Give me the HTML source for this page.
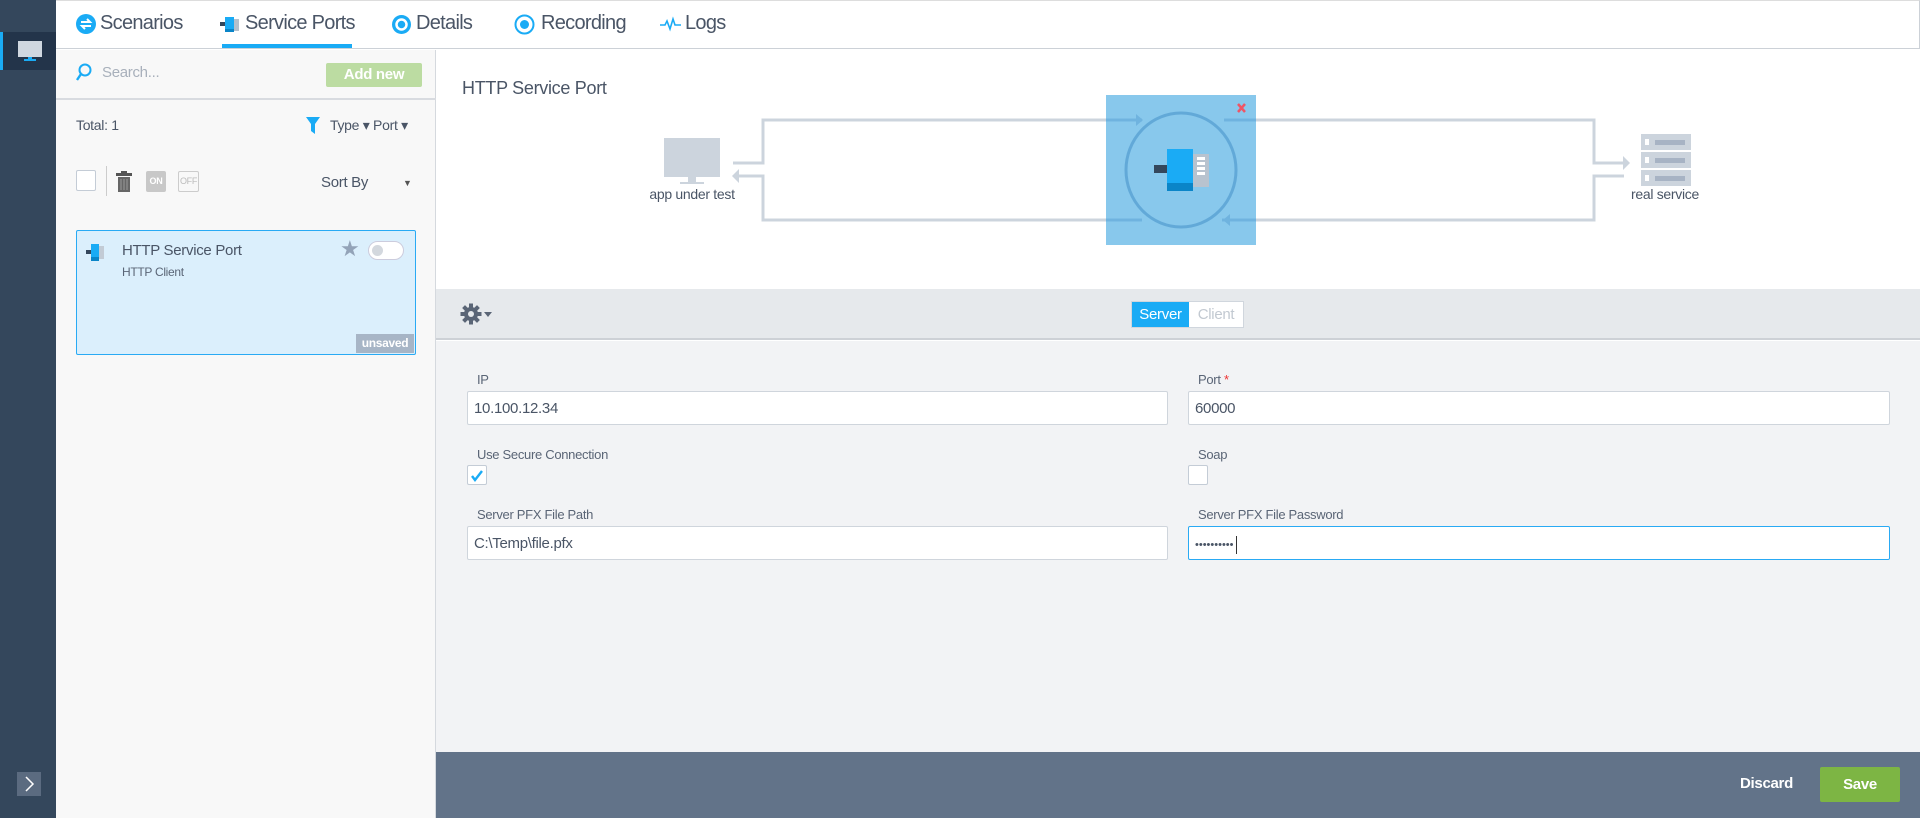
<!DOCTYPE html>
<html><head><meta charset="utf-8"><style>
*{box-sizing:border-box;margin:0;padding:0}
body{width:1920px;height:818px;overflow:hidden;background:#fff;font-family:"Liberation Sans Narrow","Liberation Sans",sans-serif;color:#4a5566;position:relative;letter-spacing:-0.3px}
.a{position:absolute}
.tab{position:absolute;top:12px;font-size:20px;color:#4a5566;letter-spacing:-0.7px}
.lbl{position:absolute;font-size:13px;color:#5a6576}
.inp{position:absolute;background:#fff;border:1px solid #cfd5dc;border-radius:2px;height:34px;font-size:15px;padding:8px 6px;color:#4a5566}
.cb{position:absolute;width:20px;height:20px;background:#fff;border:1px solid #c4ccd6;border-radius:2px}
</style></head><body>
<div class="a" style="left:0;top:0;width:56px;height:818px;background:#34475c"></div>
<div class="a" style="left:0;top:32px;width:56px;height:38px;background:#23344a;border-left:3px solid #1aabf5"></div>
<div class="a" style="left:18px;top:41px;width:24px;height:16px;background:#cfd7e0"></div>
<div class="a" style="left:28px;top:57px;width:4px;height:3px;background:#1aabf5"></div>
<div class="a" style="left:24px;top:59px;width:12px;height:2px;background:#1aabf5"></div>
<div class="a" style="left:17px;top:772px;width:24px;height:24px;background:#5b6b80"></div>
<svg class="a" style="left:17px;top:772px" width="24" height="24"><path d="M9 5l7 7-7 7" stroke="#fff" stroke-width="1.5" fill="none"/></svg>

<div class="a" style="left:56px;top:0;width:1864px;height:49px;border-bottom:1px solid #ccd1d7;border-right:1px solid #ccd1d7;border-top:1px solid #ddd"></div>
<svg class="a" style="left:76px;top:14px" width="20" height="20"><circle cx="10" cy="10" r="10" fill="#1aabf5"/><path d="M5 8h9l-3-3M15 12H6l3 3" stroke="#fff" stroke-width="2" fill="none"/></svg>
<div class="tab" style="left:100px">Scenarios</div>
<svg class="a" style="left:220px;top:14px" width="22" height="22"><rect x="0" y="8" width="5" height="4" fill="#34475c"/><rect x="5" y="3" width="9" height="15" fill="#1aabf5"/><rect x="5" y="15" width="9" height="3" fill="#0a85c8"/><rect x="14" y="5" width="5" height="12" fill="#b5c0cc"/></svg>
<div class="tab" style="left:245px">Service Ports</div>
<div class="a" style="left:222px;top:44px;width:130px;height:4px;background:#1aabf5"></div>
<svg class="a" style="left:391px;top:14px" width="21" height="21"><circle cx="10.5" cy="10.5" r="9.5" fill="#1aabf5"/><circle cx="10.5" cy="10.5" r="5" fill="none" stroke="#fff" stroke-width="2.5"/><circle cx="10.5" cy="10.5" r="2" fill="#1aabf5"/></svg>
<div class="tab" style="left:416px">Details</div>
<svg class="a" style="left:514px;top:14px" width="21" height="21"><circle cx="10.5" cy="10.5" r="9" fill="none" stroke="#1aabf5" stroke-width="2"/><circle cx="10.5" cy="10.5" r="4.5" fill="#1aabf5"/></svg>
<div class="tab" style="left:541px">Recording</div>
<svg class="a" style="left:660px;top:16px" width="22" height="16"><path d="M0 9h5l2-4 3 8 3-10 2 6h6" stroke="#1aabf5" stroke-width="1.6" fill="none"/></svg>
<div class="tab" style="left:685px">Logs</div>

<div class="a" style="left:56px;top:50px;width:380px;height:768px;background:#f8f8f8;border-right:1px solid #d5d9de"></div>
<div class="a" style="left:56px;top:98px;width:380px;height:2px;background:#d8dbe0"></div>
<svg class="a" style="left:75px;top:63px" width="18" height="20"><circle cx="10" cy="7" r="5.5" stroke="#1aabf5" stroke-width="2" fill="none"/><path d="M6 11l-4 6" stroke="#1aabf5" stroke-width="2.4"/></svg>
<div class="a" style="left:102px;top:64px;font-size:15px;color:#a8b0bb">Search...</div>
<div class="a" style="left:326px;top:63px;width:96px;height:24px;background:#bcdca2;border-radius:2px;color:#fff;font-size:15px;text-align:center;line-height:24px;font-weight:bold">Add new</div>
<div class="a" style="left:76px;top:117px;font-size:14px">Total: 1</div>
<svg class="a" style="left:306px;top:117px" width="14" height="17"><path d="M0 0h14l-5 7v10l-4-3V7z" fill="#1aabf5"/></svg>
<div class="a" style="left:330px;top:117px;font-size:14px">Type ▾ Port ▾</div>
<div class="cb" style="left:76px;top:170px;width:20px;height:21px"></div>
<div class="a" style="left:106px;top:166px;width:1px;height:30px;background:#ccc"></div>
<svg class="a" style="left:116px;top:171px" width="16" height="21"><rect x="0" y="2" width="16" height="3" fill="#555"/><rect x="5" y="0" width="6" height="3" fill="#555"/><rect x="2" y="6" width="12" height="15" fill="#666"/><path d="M5 8v11M8 8v11M11 8v11" stroke="#999" stroke-width="1"/></svg>
<div class="a" style="left:146px;top:171px;width:20px;height:21px;background:#c8c8c8;border-radius:2px;color:#fff;font-size:9px;text-align:center;line-height:21px;font-weight:bold">ON</div>
<div class="a" style="left:178px;top:171px;width:21px;height:21px;border:1px solid #ccc;border-radius:2px;color:#bbb;font-size:9px;text-align:center;line-height:19px">OFF</div>
<div class="a" style="left:321px;top:174px;font-size:15px">Sort By</div>
<div class="a" style="left:403px;top:178px;font-size:9px;color:#555">▼</div>

<div class="a" style="left:76px;top:230px;width:340px;height:125px;background:#dbeffc;border:1px solid #29aaf4;border-radius:2px"></div>
<svg class="a" style="left:86px;top:242px" width="22" height="22"><rect x="0" y="8" width="5" height="4" fill="#34475c"/><rect x="5" y="2" width="8" height="16" fill="#1aabf5"/><rect x="5" y="15" width="8" height="4" fill="#0a85c8"/><rect x="13" y="4" width="5" height="13" fill="#c2cbd5"/></svg>
<div class="a" style="left:122px;top:242px;font-size:15px;color:#4a5566">HTTP Service Port</div>
<div class="a" style="left:122px;top:265px;font-size:12px;color:#5a6576">HTTP Client</div>
<div class="a" style="left:340px;top:236px;font-size:22px;color:#93a3b8">★</div>
<div class="a" style="left:368px;top:241px;width:36px;height:19px;background:#fff;border:1px solid #ccd;border-radius:10px"></div>
<div class="a" style="left:372px;top:245px;width:11px;height:11px;background:#d3d8de;border-radius:50%"></div>
<div class="a" style="left:356px;top:334px;width:58px;height:19px;background:#a7b5c6;color:#fff;font-size:12px;text-align:center;line-height:19px;font-weight:bold">unsaved</div>

<div class="a" style="left:462px;top:78px;font-size:18px;color:#4a5566">HTTP Service Port</div>
<div class="a" style="left:664px;top:138px;width:56px;height:39px;background:#ccd4dd"></div>
<div class="a" style="left:688px;top:177px;width:8px;height:5px;background:#ccd4dd"></div>
<div class="a" style="left:680px;top:182px;width:24px;height:2px;background:#ccd4dd"></div>
<div class="a" style="left:640px;top:186px;width:104px;text-align:center;font-size:14px">app under test</div>
<svg class="a" style="left:720px;top:100px" width="920" height="140">
<g stroke="#ccd4dd" stroke-width="3" fill="none">
<path d="M13 63h30V20h377"/><path d="M420 120H43V76H14"/>
<path d="M504 20h370v43h29"/><path d="M904 76h-30v44H502"/>
</g>
<g fill="#ccd4dd"><path d="M12 76l7-7v14z"/><path d="M910 63l-7-7v14z"/></g>
</svg>
<div class="a" style="left:1106px;top:95px;width:150px;height:150px;background:#88c8ec"></div>
<svg class="a" style="left:1106px;top:95px" width="150" height="150">
<path d="M0 25h36M118 25h32M0 125h36M116 125h34" stroke="#6fb3df" stroke-width="3"/>
<ellipse cx="75" cy="75" rx="55" ry="57" stroke="#62a9d8" stroke-width="3" fill="none"/>
<path d="M30 19l7 6-7 6zM124 119l-7 6 7 6z" fill="#6fb3df"/>
<rect x="61" y="54" width="26" height="42" fill="#1aabf5"/><rect x="61" y="88" width="26" height="8" fill="#0a85c8"/>
<rect x="48" y="70" width="13" height="8" fill="#34475c"/>
<rect x="87" y="59" width="16" height="33" fill="#b8c3cf"/>
<g fill="#fff"><rect x="91" y="62" width="8" height="3"/><rect x="91" y="67" width="8" height="3"/><rect x="91" y="72" width="8" height="3"/><rect x="91" y="77" width="8" height="3"/></g>
<path d="M132 9l7 8M139 9l-7 8" stroke="#ee5566" stroke-width="2.5"/>
</svg>
<svg class="a" style="left:1641px;top:134px" width="52" height="52">
<g fill="#ccd4dd"><rect y="0" width="50" height="16"/><rect y="18" width="50" height="16"/><rect y="36" width="50" height="16"/></g>
<g fill="#a7b3c4"><rect x="14" y="6" width="30" height="5"/><rect x="14" y="24" width="30" height="5"/><rect x="14" y="42" width="30" height="5"/></g>
<g fill="#fff"><rect x="4" y="5" width="4" height="6"/><rect x="4" y="23" width="4" height="6"/><rect x="4" y="41" width="4" height="6"/></g>
</svg>
<div class="a" style="left:1615px;top:186px;width:100px;text-align:center;font-size:14px">real service</div>

<div class="a" style="left:436px;top:289px;width:1484px;height:51px;background:#e6e9ec;border-bottom:2px solid #cdd1d6"></div>
<svg class="a" style="left:460px;top:303px" width="34" height="22"><g transform="translate(11 11)" fill="#5a6576"><circle r="7"/><rect x="-2" y="-10.5" width="4" height="21"/><rect x="-2" y="-10.5" width="4" height="21" transform="rotate(45)"/><rect x="-2" y="-10.5" width="4" height="21" transform="rotate(90)"/><rect x="-2" y="-10.5" width="4" height="21" transform="rotate(135)"/><circle r="3" fill="#e6e9ec"/></g><path d="M24 9h8l-4 5z" fill="#5a6576"/></svg>
<div class="a" style="left:1131px;top:301px;width:113px;height:27px;border:1px solid #d0d6dd;background:#fff"></div>
<div class="a" style="left:1132px;top:302px;width:57px;height:25px;background:#1aabf5;color:#fff;font-size:15px;text-align:center;line-height:25px">Server</div>
<div class="a" style="left:1189px;top:302px;width:54px;height:25px;color:#c2c9d1;font-size:15px;text-align:center;line-height:25px">Client</div>

<div class="a" style="left:436px;top:341px;width:1484px;height:411px;background:#f2f3f5"></div>
<div class="lbl" style="left:477px;top:372px">IP</div>
<div class="inp" style="left:467px;top:391px;width:701px">10.100.12.34</div>
<div class="lbl" style="left:1198px;top:372px">Port <span style="color:#e33">*</span></div>
<div class="inp" style="left:1188px;top:391px;width:702px">60000</div>
<div class="lbl" style="left:477px;top:447px">Use Secure Connection</div>
<div class="cb" style="left:467px;top:465px"></div>
<svg class="a" style="left:470px;top:469px" width="14" height="14"><path d="M2 7l3 4 7-9" stroke="#1aabf5" stroke-width="2.4" fill="none"/></svg>
<div class="lbl" style="left:1198px;top:447px">Soap</div>
<div class="cb" style="left:1188px;top:465px"></div>
<div class="lbl" style="left:477px;top:507px">Server PFX File Path</div>
<div class="inp" style="left:467px;top:526px;width:701px">C:\Temp\file.pfx</div>
<div class="lbl" style="left:1198px;top:507px">Server PFX File Password</div>
<div class="inp" style="left:1188px;top:526px;width:702px;border-color:#29aaf4;font-size:11px;padding-top:9px;letter-spacing:0px">••••••••••<span style="display:inline-block;width:1px;height:18px;background:#333;vertical-align:middle;margin-left:2px"></span></div>

<div class="a" style="left:436px;top:752px;width:1484px;height:66px;background:#627389"></div>
<div class="a" style="left:1740px;top:775px;font-size:15px;color:#fff;font-weight:bold">Discard</div>
<div class="a" style="left:1820px;top:767px;width:80px;height:35px;background:#7db544;border-radius:2px;color:#fff;font-size:15px;font-weight:bold;text-align:center;line-height:35px">Save</div>
</body></html>
